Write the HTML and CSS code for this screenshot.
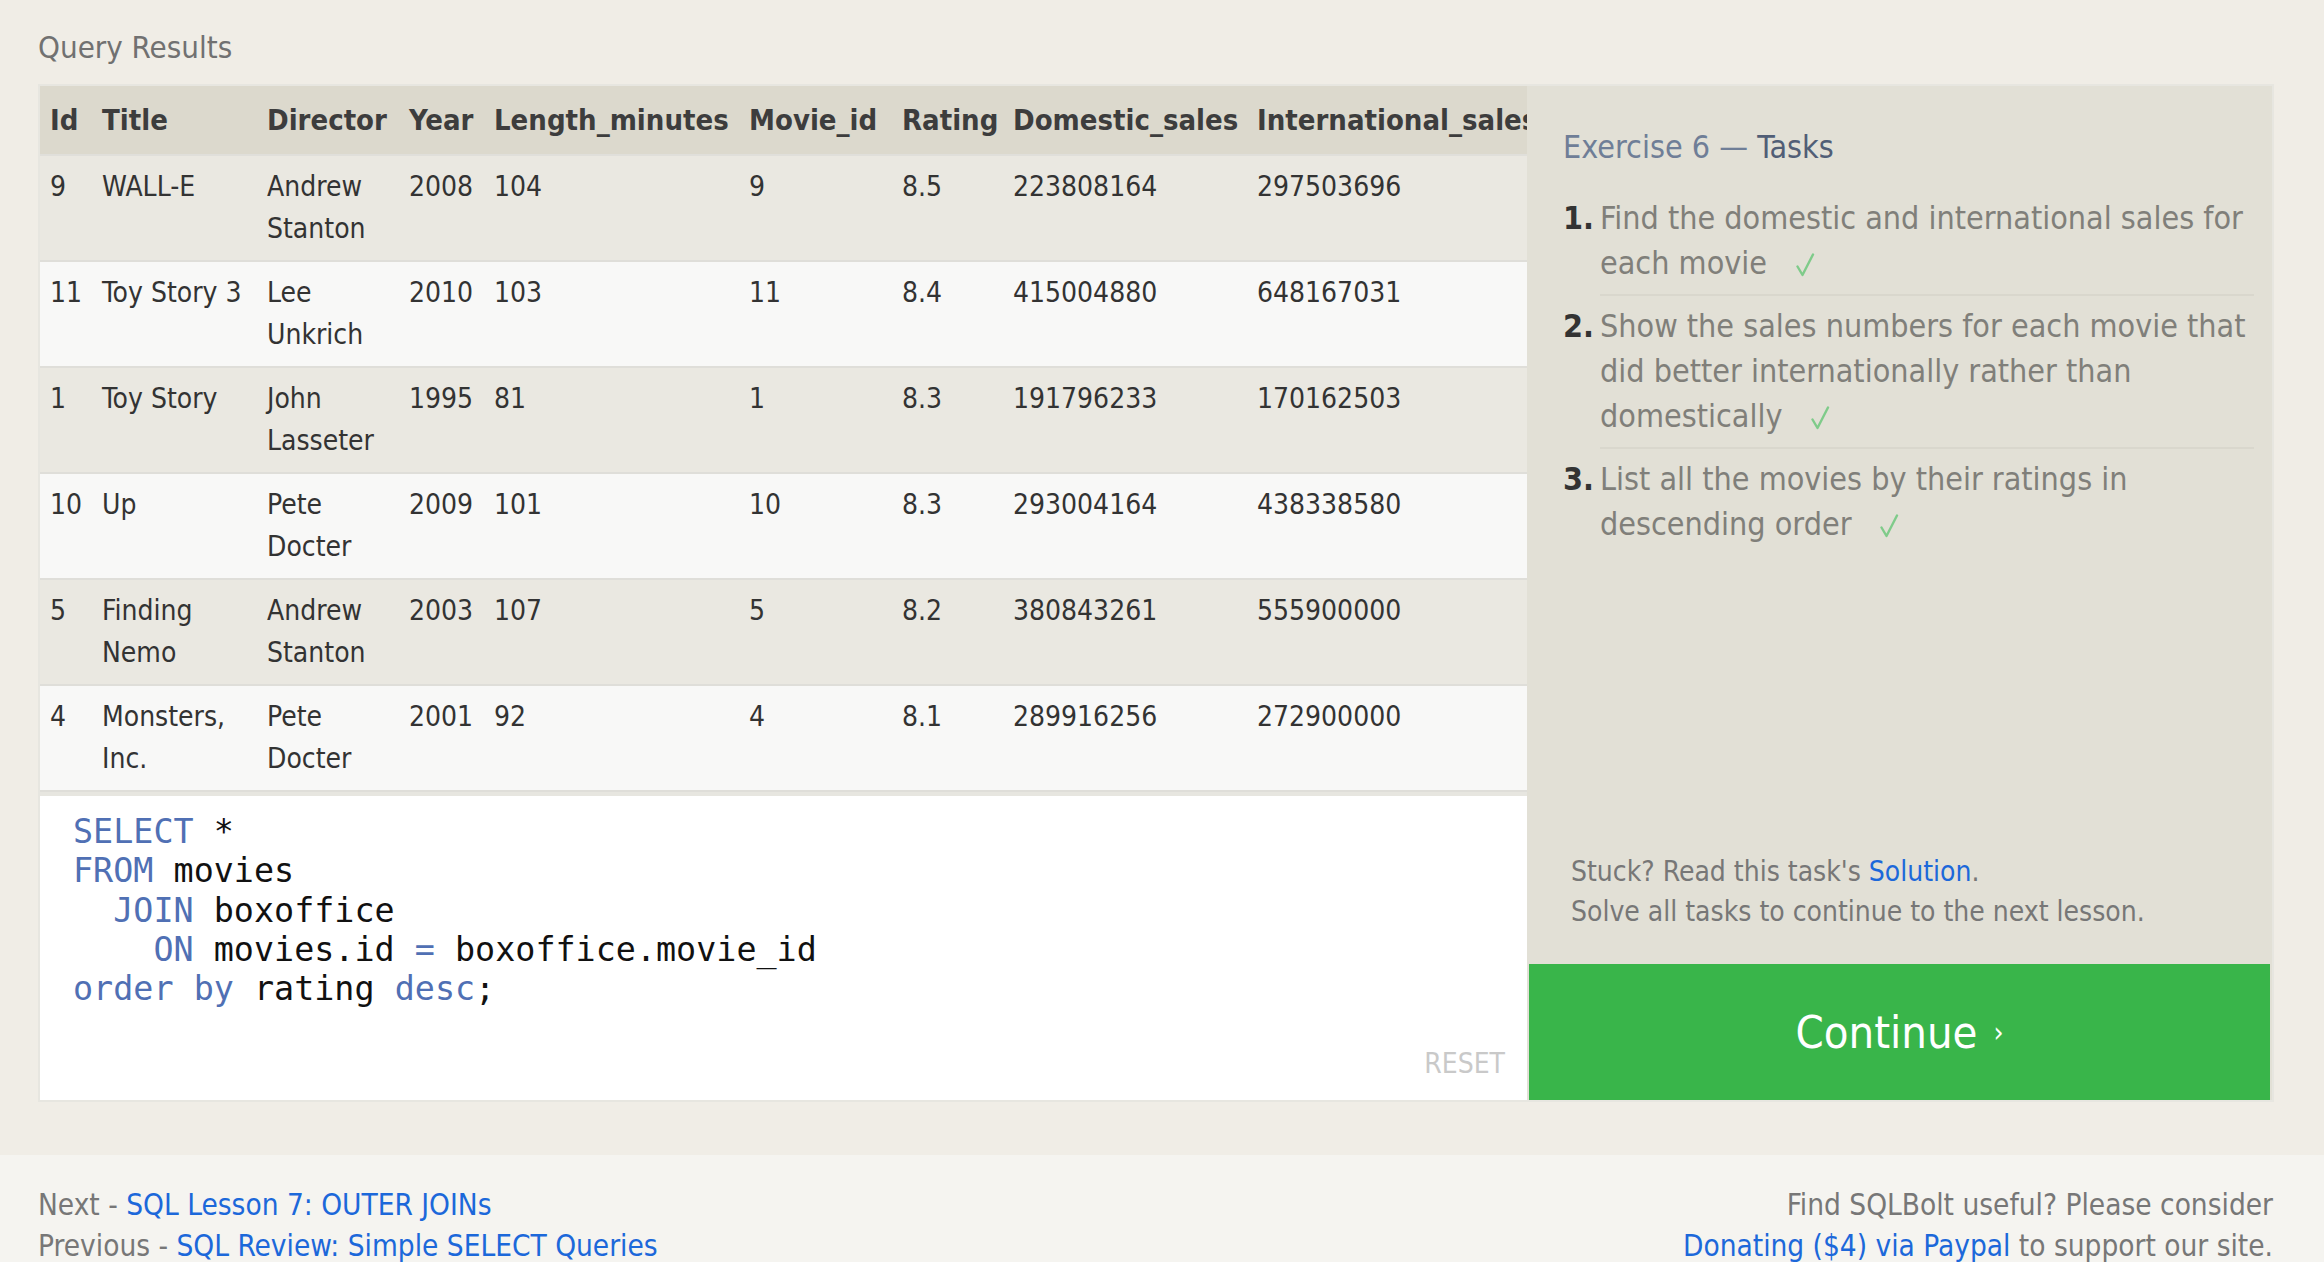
FILE: index.html
```html
<!DOCTYPE html>
<html lang="en">
<head>
<meta charset="utf-8">
<title>SQLBolt - Exercise 6</title>
<link rel="stylesheet" href="styles.css">
</head>
<body>
<section class="main">
  <h2 class="results-title">Query Results</h2>
  <div class="exercise">
    <div class="work">
      <div class="results">
        <table class="results-table">
          <colgroup>
            <col class="c-id"><col class="c-title"><col class="c-director"><col class="c-year"><col class="c-length"><col class="c-movie"><col class="c-rating"><col class="c-dom"><col class="c-intl">
          </colgroup>
          <thead>
            <tr><th>Id</th><th>Title</th><th>Director</th><th>Year</th><th>Length_minutes</th><th>Movie_id</th><th>Rating</th><th>Domestic_sales</th><th>International_sales</th></tr>
          </thead>
          <tbody>
            <tr><td>9</td><td>WALL-E</td><td>Andrew Stanton</td><td>2008</td><td>104</td><td>9</td><td>8.5</td><td>223808164</td><td>297503696</td></tr>
            <tr><td>11</td><td>Toy Story 3</td><td>Lee Unkrich</td><td>2010</td><td>103</td><td>11</td><td>8.4</td><td>415004880</td><td>648167031</td></tr>
            <tr><td>1</td><td>Toy Story</td><td>John Lasseter</td><td>1995</td><td>81</td><td>1</td><td>8.3</td><td>191796233</td><td>170162503</td></tr>
            <tr><td>10</td><td>Up</td><td>Pete Docter</td><td>2009</td><td>101</td><td>10</td><td>8.3</td><td>293004164</td><td>438338580</td></tr>
            <tr><td>5</td><td>Finding Nemo</td><td>Andrew Stanton</td><td>2003</td><td>107</td><td>5</td><td>8.2</td><td>380843261</td><td>555900000</td></tr>
            <tr><td>4</td><td>Monsters, Inc.</td><td>Pete Docter</td><td>2001</td><td>92</td><td>4</td><td>8.1</td><td>289916256</td><td>272900000</td></tr>
          </tbody>
        </table>
      </div>
      <div class="editor">
        <div class="code">
          <div class="code-line"><span class="kw">SELECT</span> *</div>
          <div class="code-line"><span class="kw">FROM</span> movies</div>
          <div class="code-line indent-1"><span class="kw">JOIN</span> boxoffice</div>
          <div class="code-line indent-2"><span class="kw">ON</span> movies.id <span class="kw">=</span> boxoffice.movie_id</div>
          <div class="code-line"><span class="kw">order</span> <span class="kw">by</span> rating <span class="kw">desc</span>;</div>
        </div>
        <div class="reset">RESET</div>
      </div>
    </div>
    <aside class="panel">
      <div class="panel-body">
        <h3 class="tasks-title">Exercise 6 — <span class="tasks-word">Tasks</span></h3>
        <ol class="tasks">
          <li class="task"><span class="task-num">1.</span><div class="task-text">Find the domestic and international sales for each movie<svg class="check" viewBox="0 0 20 24" aria-hidden="true"><path d="M2.5 13.5 L7.5 22 L18 1.5"/></svg></div></li>
          <li class="task"><span class="task-num">2.</span><div class="task-text">Show the sales numbers for each movie that did better internationally rather than domestically<svg class="check" viewBox="0 0 20 24" aria-hidden="true"><path d="M2.5 13.5 L7.5 22 L18 1.5"/></svg></div></li>
          <li class="task"><span class="task-num">3.</span><div class="task-text">List all the movies by their ratings in descending order<svg class="check" viewBox="0 0 20 24" aria-hidden="true"><path d="M2.5 13.5 L7.5 22 L18 1.5"/></svg></div></li>
        </ol>
        <div class="stuck">
          <p>Stuck? Read this task's <a href="#">Solution</a>.</p>
          <p>Solve all tasks to continue to the next lesson.</p>
        </div>
      </div>
      <a class="continue" href="#">Continue<span class="chev">›</span></a>
    </aside>
  </div>
</section>
<footer class="footer">
  <div class="footer-left">
    <p>Next - <a href="#">SQL Lesson 7: OUTER JOINs</a></p>
    <p>Previous - <a href="#">SQL Review: Simple SELECT Queries</a></p>
  </div>
  <div class="footer-right">
    <p>Find SQLBolt useful? Please consider</p>
    <p><a href="#">Donating ($4) via Paypal</a> to support our site.</p>
  </div>
</footer>
</body>
</html>
```

FILE: styles.css
```css
* { box-sizing: border-box; }

body {
  margin: 0;
  background: #f5f4f0;
  font-family: "DejaVu Sans Condensed", "DejaVu Sans", sans-serif;
  font-stretch: semi-condensed;
  color: #333;
}

a { color: #1c68da; text-decoration: none; }

.main {
  background: #f0ede6;
  padding: 29px 50px 53px 38px;
}

.results-title {
  margin: 0 0 19px;
  font-size: 31px;
  line-height: 36px;
  font-weight: normal;
  color: #717171;
}

.exercise {
  display: flex;
  border: 2px solid #e7e6e0;
}

.work {
  flex: 1;
  min-width: 0;
  display: flex;
  flex-direction: column;
}

.results {
  overflow: hidden;
  border-bottom: 4px solid #e7e6e0;
}

.results-table {
  table-layout: fixed;
  width: 1507px;
  border-collapse: collapse;
  font-size: 28px;
  color: #333;
}

.c-id { width: 52px; }
.c-title { width: 165px; }
.c-director { width: 142px; }
.c-year { width: 85px; }
.c-length { width: 255px; }
.c-movie { width: 153px; }
.c-rating { width: 111px; }
.c-dom { width: 244px; }
.c-intl { width: 300px; }

.results-table th {
  text-align: left;
  background: #dcd9cd;
  font-weight: bold;
  font-size: 29px;
  line-height: 44px;
  padding: 12px 2px 12px 10px;
  white-space: nowrap;
  border-bottom: 2px solid #e0dfda;
  color: #3d3d3d;
}

.results-table td {
  padding: 10px 2px 10px 10px;
  line-height: 42px;
  vertical-align: top;
  border-bottom: 2px solid #dfded9;
}

.results-table tbody tr:nth-child(odd) { background: #eae8e1; }
.results-table tbody tr:nth-child(even) { background: #f8f8f7; }

.editor {
  height: 304px;
  background: #ffffff;
  display: flex;
  flex-direction: column;
  justify-content: space-between;
  padding: 16px 22px 20px 33px;
}

.code {
  font-family: "DejaVu Sans Mono", monospace;
  font-size: 33.4px;
  line-height: 39.3px;
  color: #111;
}

.code-line { white-space: pre; }
.indent-1 { padding-left: 2ch; }
.indent-2 { padding-left: 4ch; }

.kw { color: #5070b4; }

.reset {
  align-self: flex-end;
  font-size: 28px;
  line-height: 32px;
  color: #c9c9c9;
}

.panel {
  flex: 0 0 745px;
  background: #e2e0d6;
  display: flex;
  flex-direction: column;
}

.panel-body {
  flex: 1;
  display: flex;
  flex-direction: column;
  padding: 41px 18px 0 36px;
}

.tasks-title {
  margin: 0;
  font-size: 32px;
  line-height: 40px;
  font-weight: normal;
  color: #6f7e97;
}

.tasks-word { color: #515e76; }

.tasks {
  list-style: none;
  margin: 21px 0 0;
  padding: 0;
}

.task {
  display: grid;
  grid-template-columns: 37px 1fr;
  font-size: 32px;
  line-height: 45px;
}

.task-num {
  padding-top: 8px;
  font-weight: bold;
  color: #333;
}

.task-text {
  padding: 8px 0;
  border-bottom: 2px solid #d9d7cd;
  color: #807f7a;
}

.task:last-child .task-text { border-bottom: none; }

.check {
  display: inline-block;
  width: 20px;
  height: 24px;
  margin-left: 28px;
  vertical-align: -3px;
  fill: none;
  stroke: #7fcb8a;
  stroke-width: 2.4;
  stroke-linecap: round;
  stroke-linejoin: round;
}

.stuck {
  margin-top: auto;
  padding: 0 0 32px 8px;
  font-size: 28px;
  line-height: 40px;
  color: #777;
}

.stuck p { margin: 0; }

.continue {
  height: 136px;
  margin: 0 2px;
  display: flex;
  align-items: center;
  justify-content: center;
  background: #39b54a;
  color: #ffffff;
  font-size: 45px;
}

.chev {
  font-size: 28px;
  margin-left: 16px;
}

.footer {
  display: flex;
  justify-content: space-between;
  padding: 30px 51px 40px 38px;
  font-size: 29.5px;
  line-height: 41px;
  color: #777;
}

.footer p { margin: 0; }

.footer-right { text-align: right; }
```
